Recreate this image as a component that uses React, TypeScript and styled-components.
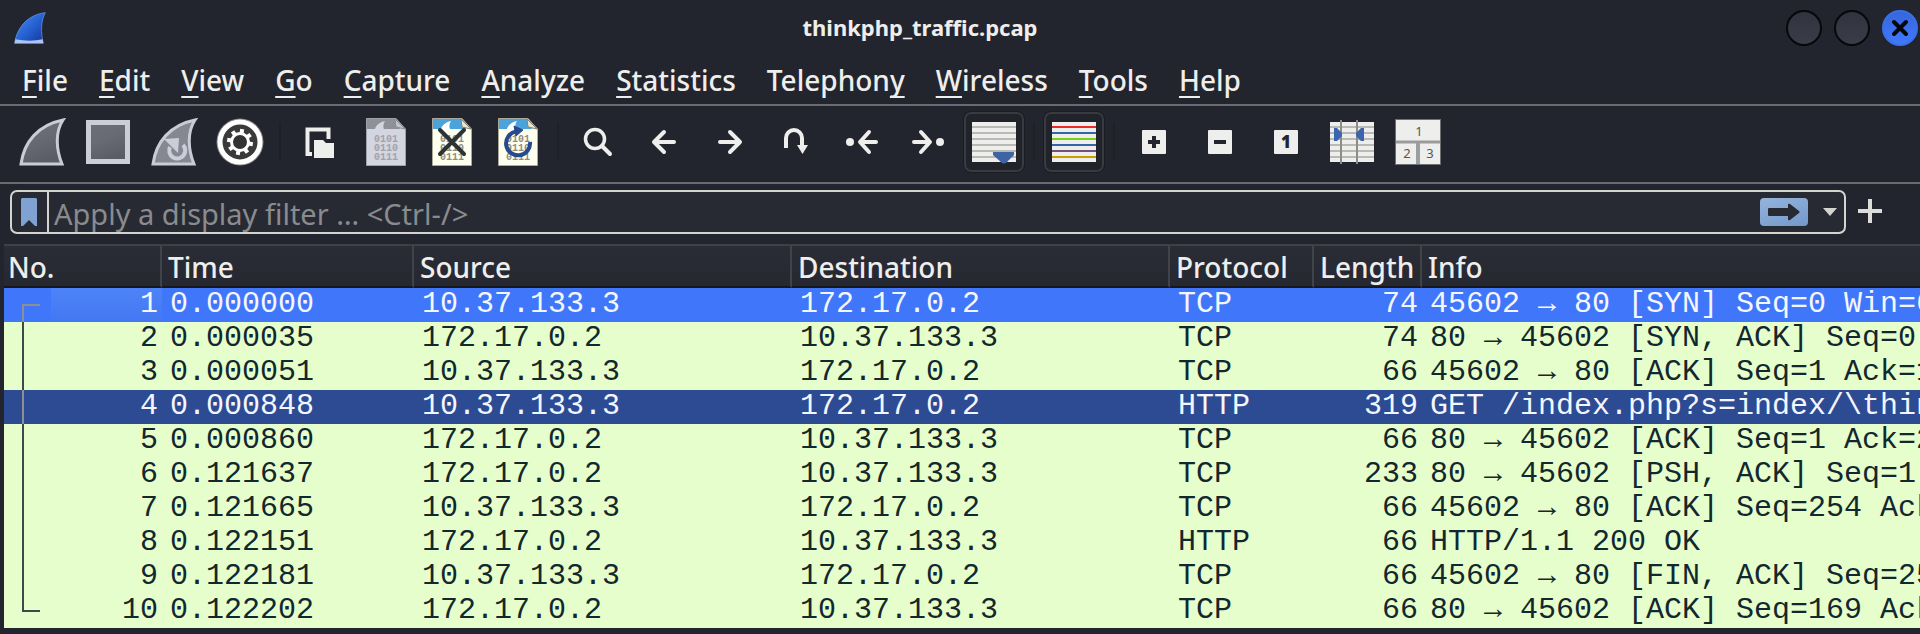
import React from 'react';
import styled, { createGlobalStyle, css } from 'styled-components';

const GlobalStyle = createGlobalStyle`
  * { box-sizing: border-box; }
  html, body, #root { min-height: 100vh; }
  body {
    margin: 0;
    background: #23252e;
    color: #eeeeec;
    font-family: "Noto Sans", "Liberation Sans", sans-serif;
    font-size: 28px;
    overflow: hidden;
  }
  button, input { font: inherit; color: inherit; }
`;

const Window = styled.div`
  display: flex;
  flex-direction: column;
  min-height: 100vh;
`;

const TitleBar = styled.header`
  display: flex;
  align-items: center;
  height: 56px;
  padding: 0 2px 0 14px;
`;

const Title = styled.h1`
  flex: 1;
  margin: 0;
  padding: 0 0 2px 8px;
  text-align: center;
  font-size: 22px;
  font-weight: 700;
  line-height: 54px;
`;

const WindowButtons = styled.div`
  display: flex;
  gap: 12px;
`;

const WindowButton = styled.button<{ $close?: boolean }>`
  display: grid;
  place-items: center;
  width: 36px;
  height: 36px;
  padding: 0;
  border: 2px solid ${(p) => (p.$close ? '#3a70ec' : '#07080b')};
  border-radius: 50%;
  background: ${(p) =>
    p.$close ? 'linear-gradient(#3666dc, #4078fc)' : 'linear-gradient(#31333d, #3a3d49)'};
`;

const MenuBar = styled.nav`
  display: flex;
  gap: 1px;
  height: 50px;
  padding-left: 7px;
  border-bottom: 2px solid #6a6b70;
`;

const MenuItem = styled.button`
  padding: 0 15px;
  border: 0;
  background: none;
  font-weight: 500;
  line-height: 46px;
`;

const Mnemonic = styled.span`
  text-decoration: underline;
  text-decoration-thickness: 2px;
  text-underline-offset: 5px;
  text-decoration-skip-ink: none;
`;

const ToolBar = styled.div`
  display: flex;
  align-items: center;
  height: 78px;
  padding: 0 0 4px 9px;
  border-bottom: 2px solid #6a6b70;
`;

const Separator = styled.span`
  width: 2px;
  height: 38px;
  margin: 0 6px;
  background: #1e2028;
`;

const ToolButton = styled.button<{ $pressed?: boolean }>`
  display: grid;
  place-items: center;
  width: 66px;
  height: 60px;
  padding: 0;
  border: 0;
  background: none;
  ${(p) =>
    p.$pressed &&
    css`
      width: 60px;
      margin: 0 3px;
      border: 2px solid #393b41;
      border-radius: 7px;
      outline: 1px solid #1b1c22;
      background: #21232b;
    `}
`;

const FilterRow = styled.form`
  display: flex;
  align-items: center;
  height: 60px;
  margin: 0;
  padding: 6px 36px 10px 10px;
`;

const FilterBox = styled.div`
  display: flex;
  align-items: center;
  flex: 1;
  height: 44px;
  border: 2px solid #d3d4cf;
  border-radius: 7px;
  background: #272a33;
`;

const BookmarkButton = styled.button`
  display: grid;
  place-items: center;
  width: 37px;
  height: 40px;
  padding: 0 2px 0 0;
  border: 0;
  border-right: 2px solid #d3d4cf;
  background: none;
`;

const FilterInput = styled.input`
  flex: 1;
  min-width: 0;
  height: 40px;
  padding: 2px 5px 0;
  border: 0;
  outline: 0;
  background: none;
  font-size: 29px;
  &::placeholder { color: #8a8b8e; opacity: 1; }
`;

const ApplyButton = styled.button`
  display: grid;
  place-items: center;
  width: 48px;
  height: 28px;
  margin-right: 8px;
  padding: 0;
  border: 0;
  border-radius: 4px;
  background: linear-gradient(160deg, #96b4dc, #7299ca);
`;

const PlainButton = styled.button`
  display: grid;
  place-items: center;
  width: 28px;
  height: 40px;
  padding: 0;
  border: 0;
  background: none;
`;

const AddButton = styled(PlainButton)`
  margin-left: 10px;
`;

const PacketPane = styled.main`
  padding-left: 4px;
  overflow: hidden;
`;

const PacketTable = styled.table`
  width: 100%;
  table-layout: fixed;
  border-collapse: separate;
  border-spacing: 0;
`;

const Col = styled.col<{ $width?: number }>`
  width: ${(p) => (p.$width ? `${p.$width}px` : 'auto')};
`;

const HeadCell = styled.th`
  height: 44px;
  padding: 2px 0 0 6px;
  border-top: 2px solid #3f4148;
  border-bottom: 2px solid #15171c;
  border-right: 2px solid #41434a;
  background: linear-gradient(#2a2d36, #252831);
  text-align: left;
  font-weight: 500;
  line-height: 38px;
  white-space: nowrap;
  &:first-child { padding-left: 4px; }
  &:last-child { border-right: 0; }
`;

type Tone = 'current' | 'related' | 'normal';

const rowColours: Record<Tone, { back: string; text: string; line: string }> = {
  current: { back: '#4076f9', text: '#f4f6ff', line: '#8d8f93' },
  related: { back: '#2d4b92', text: '#f4f6ff', line: '#8d8f93' },
  normal: { back: '#e6fecb', text: '#12272e', line: '#3c4a4c' },
};

const Row = styled.tr<{ $tone: Tone }>`
  background: ${(p) => rowColours[p.$tone].back};
  color: ${(p) => rowColours[p.$tone].text};
  font-family: "Liberation Mono", "DejaVu Sans Mono", monospace;
  font-size: 30px;
  line-height: 32px;
`;

const Cell = styled.td<{ $right?: boolean }>`
  height: 34px;
  padding: 0 4px 2px 8px;
  overflow: hidden;
  white-space: nowrap;
  text-align: ${(p) => (p.$right ? 'right' : 'left')};
`;

const NumberCell = styled.td`
  height: 34px;
  padding: 0;
`;

const NumberLine = styled.div`
  display: flex;
  height: 34px;
  padding-left: 18px;
`;

type Place = 'first' | 'middle' | 'last';

const Bracket = styled.span<{ $tone: Tone; $place: Place }>`
  width: 18px;
  height: ${(p) => (p.$place === 'middle' ? 34 : 18)}px;
  align-self: ${(p) => (p.$place === 'first' ? 'flex-end' : 'flex-start')};
  border: 0 solid ${(p) => rowColours[p.$tone].line};
  border-left-width: 2px;
  border-top-width: ${(p) => (p.$place === 'first' ? 2 : 0)}px;
  border-bottom-width: ${(p) => (p.$place === 'last' ? 2 : 0)}px;
`;

const NumberValue = styled.span<{ $focused: boolean }>`
  flex: 1;
  margin-left: 11px;
  padding-right: 4px;
  text-align: right;
  background: ${(p) => (p.$focused ? 'linear-gradient(#4d83f8, #4477f2)' : 'none')};
`;

/* ---------- icons ---------- */

const Icon = ({ size = 48, children }: { size?: number; children: React.ReactNode }) => (
  <svg width={size} height={size} viewBox="0 0 48 48" aria-hidden="true">
    {children}
  </svg>
);

const finPath = 'M3 46 C6 24 20 7 45 2 C37 14 38 31 44 46 Z';

const AppLogo = () => (
  <svg width="32" height="32" viewBox="0 0 48 48" aria-hidden="true">
    <defs>
      <linearGradient id="logo" x1="0" y1="0" x2="1" y2="1">
        <stop offset="0" stopColor="#4a90f0" />
        <stop offset="0.5" stopColor="#2763d4" />
        <stop offset="1" stopColor="#123295" />
      </linearGradient>
    </defs>
    <path d="M1 47 C4 24 20 4 47 1 C40 14 40 31 44 47 Z" fill="url(#logo)" stroke="#6d9ff0" strokeWidth="1" />
    <path d="M1 47 L2 41 Q24 45 43 41 L44 47 Z" fill="#a9c4f5" />
  </svg>
);

const Greys = () => (
  <defs>
    <linearGradient id="grey" x1="0" y1="0" x2="0.4" y2="1">
      <stop offset="0" stopColor="#6c6f78" />
      <stop offset="0.5" stopColor="#686b73" />
      <stop offset="1" stopColor="#5a5d65" />
    </linearGradient>
  </defs>
);

const StartIcon = () => (
  <Icon>
    <Greys />
    <path d={finPath} fill="url(#grey)" stroke="#c9ccd8" strokeWidth="3" />
  </Icon>
);

const StopIcon = () => (
  <Icon>
    <Greys />
    <rect x="4.500" y="4.500" width="39" height="39" fill="url(#grey)" stroke="#cbcdd9" strokeWidth="5" />
  </Icon>
);

const RestartIcon = () => (
  <Icon>
    <path d={finPath} fill="#858891" stroke="#c9ccd8" strokeWidth="3" />
    <path d="M20 29 A8 8 0 1 0 33 27" fill="none" stroke="#cbcdd9" strokeWidth="4" />
    <path d="M14 21 L29 20 L28 35 Z" fill="#cbcdd9" />
  </Icon>
);

const teeth = [0, 45, 90, 135, 180, 225, 270, 315];

const OptionsIcon = () => (
  <Icon>
    <circle cx="24" cy="24" r="23.500" fill="#8b8b8b" />
    <circle cx="24" cy="24" r="20" fill="#3a3a3a" stroke="#ffffff" strokeWidth="5" />
    {teeth.map((angle) => (
      <rect key={angle} x="22" y="11" width="4" height="6" fill="#fff" transform={`rotate(${angle + 10} 24 24)`} />
    ))}
    <circle cx="24" cy="24" r="8.500" fill="#333" stroke="#fff" strokeWidth="3" />
  </Icon>
);

const OpenIcon = () => (
  <Icon>
    <path d="M16 36 H11.500 V11.500 H32.500 V21" fill="none" stroke="#eeeeec" strokeWidth="4" />
    <path d="M18 22 H27 L30 25 H38 V40 H18 Z" fill="#eeeeec" />
  </Icon>
);

const Document = ({ dim, children }: { dim?: boolean; children?: React.ReactNode }) => (
  <Icon>
    <path
      d="M4.500 0.500 H34 L43.500 11 V47.500 H4.500 Z"
      fill={dim ? '#d3d5e0' : '#fffff0'}
      stroke={dim ? '#9fa1aa' : '#a9a899'}
    />
    <path d="M5 1 H33 L38 11 H5 Z" fill={dim ? '#8f9199' : '#4ba3dc'} />
    <path d="M13 11 C14 7 18 4 23 3 C21 6 21 9 22 11 Z" fill={dim ? '#d3d5e0' : '#ffffff'} />
    <path d="M33 1 L43 11 L34 9 Z" fill={dim ? '#c3c5ce' : '#e8e6cf'} stroke={dim ? '#8a8c95' : '#85836c'} />
    <g fill={dim ? '#a0a2ab' : '#8d8d83'} fontFamily="Liberation Mono, monospace" fontSize="10" fontWeight="700" textAnchor="middle">
      <text x="24" y="24">0101</text>
      <text x="24" y="33">0110</text>
      <text x="24" y="42">0111</text>
    </g>
    {children}
  </Icon>
);

const CloseFileIcon = () => (
  <Document>
    <path d="M12 12 L36 36 M36 12 L12 36" stroke="#2b3336" strokeWidth="4" strokeLinecap="round" />
  </Document>
);

const ReloadIcon = () => (
  <Document>
    <path d="M22 13.500 A12 12 0 1 0 36 24" fill="none" stroke="#254a8d" strokeWidth="4" />
    <path d="M20 8 L29 12 L22 18 Z" fill="#254a8d" stroke="#254a8d" strokeLinejoin="round" />
  </Document>
);

const SearchIcon = () => (
  <Icon>
    <circle cx="21" cy="21" r="9.500" fill="none" stroke="#eeeeec" strokeWidth="3.500" />
    <path d="M28 28 L36 36" stroke="#eeeeec" strokeWidth="4" strokeLinecap="round" />
  </Icon>
);

const ArrowIcon = ({ flip, dot }: { flip?: boolean; dot?: boolean }) => (
  <Icon>
    <g transform={flip ? 'matrix(-1 0 0 1 48 0)' : undefined}>
      {dot && <circle cx="12" cy="24" r="4" fill="#eeeeec" />}
      <path
        d={dot ? 'M38 24 H24 M31 14 L22 24 L31 34' : 'M34 24 H16 M24 14 L14 24 L24 34'}
        fill="none"
        stroke="#eeeeec"
        strokeWidth="4"
        strokeLinecap="round"
        strokeLinejoin="round"
      />
    </g>
  </Icon>
);

const GoToIcon = () => (
  <Icon>
    <path d="M14 30 V20 A8 8 0 0 1 30 20 V28" fill="none" stroke="#eeeeec" strokeWidth="4" />
    <path d="M25 27 H36 L30.500 36 Z" fill="#eeeeec" />
  </Icon>
);

const Sheet = ({ colours, children }: { colours: string[]; children?: React.ReactNode }) => (
  <Icon>
    <rect x="2" y="4" width="44" height="40" fill="#eeeeec" />
    {colours.map((colour, i) => (
      <rect key={i} x="2" y={8 + i * 6} width="44" height="2" fill={colour} />
    ))}
    {children}
  </Icon>
);

const plainLines = Array(6).fill('#b9bab6');

const AutoScrollIcon = () => (
  <Sheet colours={plainLines}>
    <path d="M23 34 H44 V37 L36 45 Q34 46 32 45 L23 37 Z" fill="#3f64a4" />
  </Sheet>
);

const ColoriseIcon = () => (
  <Sheet colours={['#ef2929', '#3465a4', '#73d216', '#3465a4', '#75507b', '#c4a000']} />
);

const ResizeIcon = () => (
  <Sheet colours={plainLines}>
    <path d="M13 2 V46 M29 2 V46" stroke="#8c8d86" strokeWidth="2" />
    <path d="M6 10 H9 L14 15 V18 L9 23 H6 Z M36 10 H33 L28 15 V18 L33 23 H36 Z" fill="#3c65ad" />
  </Sheet>
);

const LayoutIcon = () => (
  <Icon>
    <rect x="1.500" y="1.500" width="45" height="45" fill="#eeeeec" stroke="#6c7070" />
    <path d="M2 24 H46" stroke="#9a9c9c" strokeWidth="3" />
    <path d="M24 25 V46" stroke="#9a9fa2" strokeWidth="4" />
    <g fill="#555753" fontFamily="Noto Sans, sans-serif" fontSize="13" textAnchor="middle">
      <text x="25" y="18">1</text>
      <text x="13" y="40">2</text>
      <text x="36" y="40">3</text>
    </g>
  </Icon>
);

const Tile = ({ d, label }: { d?: string; label?: string }) => (
  <Icon>
    <rect x="12" y="12" width="24" height="24" rx="1" fill="#eeeeec" />
    {d && <path d={d} fill="none" stroke="#23252e" strokeWidth="4" />}
    {label && (
      <text x="24" y="30" fill="#23252e" fontFamily="Noto Sans, sans-serif" fontSize="17" fontWeight="900" textAnchor="middle">
        {label}
      </text>
    )}
  </Icon>
);

/* ---------- data ---------- */

const menus: [string, string, string][] = [
  ['', 'F', 'ile'],
  ['', 'E', 'dit'],
  ['', 'V', 'iew'],
  ['', 'G', 'o'],
  ['', 'C', 'apture'],
  ['', 'A', 'nalyze'],
  ['', 'S', 'tatistics'],
  ['Telephon', 'y', ''],
  ['', 'W', 'ireless'],
  ['', 'T', 'ools'],
  ['', 'H', 'elp'],
];

type Tool = { label: string; icon: React.ReactNode; pressed?: boolean };

const toolGroups: Tool[][] = [
  [
    { label: 'Start capture', icon: <StartIcon /> },
    { label: 'Stop capture', icon: <StopIcon /> },
    { label: 'Restart capture', icon: <RestartIcon /> },
    { label: 'Capture options', icon: <OptionsIcon /> },
  ],
  [
    { label: 'Open file', icon: <OpenIcon /> },
    { label: 'Save file', icon: <Document dim /> },
    { label: 'Close file', icon: <CloseFileIcon /> },
    { label: 'Reload file', icon: <ReloadIcon /> },
  ],
  [
    { label: 'Find packet', icon: <SearchIcon /> },
    { label: 'Previous packet', icon: <ArrowIcon /> },
    { label: 'Next packet', icon: <ArrowIcon flip /> },
    { label: 'Go to packet', icon: <GoToIcon /> },
    { label: 'First packet', icon: <ArrowIcon dot /> },
    { label: 'Last packet', icon: <ArrowIcon flip dot /> },
    { label: 'Auto scroll', icon: <AutoScrollIcon />, pressed: true },
  ],
  [{ label: 'Colorize', icon: <ColoriseIcon />, pressed: true }],
  [
    { label: 'Zoom in', icon: <Tile d="M18 24 H30 M24 18 V30" /> },
    { label: 'Zoom out', icon: <Tile d="M18 24 H30" /> },
    { label: 'Normal size', icon: <Tile label="1" /> },
    { label: 'Resize columns', icon: <ResizeIcon /> },
    { label: 'Reset layout', icon: <LayoutIcon /> },
  ],
];

const columns: { name: string; width?: number }[] = [
  { name: 'No.', width: 158 },
  { name: 'Time', width: 252 },
  { name: 'Source', width: 378 },
  { name: 'Destination', width: 378 },
  { name: 'Protocol', width: 144 },
  { name: 'Length', width: 108 },
  { name: 'Info' },
];

const CLIENT = '10.37.133.3';
const SERVER = '172.17.0.2';

type Packet = { time: string; out: boolean; protocol: string; length: number; info: string };

const packets: Packet[] = [
  { time: '0.000000', out: true, protocol: 'TCP', length: 74, info: '45602 → 80 [SYN] Seq=0 Win=6' },
  { time: '0.000035', out: false, protocol: 'TCP', length: 74, info: '80 → 45602 [SYN, ACK] Seq=0' },
  { time: '0.000051', out: true, protocol: 'TCP', length: 66, info: '45602 → 80 [ACK] Seq=1 Ack=1' },
  { time: '0.000848', out: true, protocol: 'HTTP', length: 319, info: 'GET /index.php?s=index/\\thin' },
  { time: '0.000860', out: false, protocol: 'TCP', length: 66, info: '80 → 45602 [ACK] Seq=1 Ack=2' },
  { time: '0.121637', out: false, protocol: 'TCP', length: 233, info: '80 → 45602 [PSH, ACK] Seq=1' },
  { time: '0.121665', out: true, protocol: 'TCP', length: 66, info: '45602 → 80 [ACK] Seq=254 Ack' },
  { time: '0.122151', out: false, protocol: 'HTTP', length: 66, info: 'HTTP/1.1 200 OK' },
  { time: '0.122181', out: true, protocol: 'TCP', length: 66, info: '45602 → 80 [FIN, ACK] Seq=25' },
  { time: '0.122202', out: false, protocol: 'TCP', length: 66, info: '80 → 45602 [ACK] Seq=169 Ack' },
];

const toneOf = (i: number): Tone => (i === 0 ? 'current' : i === 3 ? 'related' : 'normal');
const placeOf = (i: number): Place => (i === 0 ? 'first' : i === packets.length - 1 ? 'last' : 'middle');

export default function App() {
  return (
    <>
      <GlobalStyle />
      <Window>
        <TitleBar>
          <AppLogo />
          <Title>thinkphp_traffic.pcap</Title>
          <WindowButtons>
            <WindowButton aria-label="Minimize" />
            <WindowButton aria-label="Maximize" />
            <WindowButton aria-label="Close" $close>
              <svg width="18" height="18" viewBox="0 0 18 18" aria-hidden="true">
                <path d="M3 3 L15 15 M15 3 L3 15" stroke="#05070c" strokeWidth="4" strokeLinecap="round" />
              </svg>
            </WindowButton>
          </WindowButtons>
        </TitleBar>

        <MenuBar>
          {menus.map(([before, key, after]) => (
            <MenuItem key={before + key + after}>
              {before}
              <Mnemonic>{key}</Mnemonic>
              {after}
            </MenuItem>
          ))}
        </MenuBar>

        <ToolBar role="toolbar">
          {toolGroups.map((group, i) => (
            <React.Fragment key={i}>
              {i > 0 && <Separator />}
              {group.map((tool) => (
                <ToolButton key={tool.label} aria-label={tool.label} aria-pressed={tool.pressed} $pressed={tool.pressed}>
                  {tool.icon}
                </ToolButton>
              ))}
            </React.Fragment>
          ))}
        </ToolBar>

        <FilterRow onSubmit={(e) => e.preventDefault()}>
          <FilterBox>
            <BookmarkButton type="button" aria-label="Saved filters">
              <svg width="16" height="28" viewBox="0 0 16 28" aria-hidden="true">
                <path d="M1 0 H15 L16 1 V28 H14 L8 22 L2 28 H0 V1 Z" fill="#7fa2d2" />
              </svg>
            </BookmarkButton>
            <FilterInput aria-label="Display filter" placeholder="Apply a display filter … <Ctrl-/>" />
            <ApplyButton aria-label="Apply filter">
              <svg width="32" height="18" viewBox="0 0 32 18" aria-hidden="true">
                <path d="M0 6 Q0 5 1 5 H20 V2 Q20 0 22 1 L31 8 Q32 9 31 10 L22 17 Q20 18 20 16 V13 H1 Q0 13 0 12 Z" fill="#272a33" />
              </svg>
            </ApplyButton>
            <PlainButton type="button" aria-label="Filter history">
              <svg width="14" height="8" viewBox="0 0 14 8" aria-hidden="true">
                <path d="M0 0 H14 L7 8 Z" fill="#d3d4cf" />
              </svg>
            </PlainButton>
          </FilterBox>
          <AddButton type="button" aria-label="Add filter button">
            <svg width="26" height="26" viewBox="0 0 26 26" aria-hidden="true">
              <path d="M1 12 H25 M13 0 V24" stroke="#dcdddb" strokeWidth="4" />
            </svg>
          </AddButton>
        </FilterRow>

        <PacketPane>
          <PacketTable>
            <colgroup>
              {columns.map((c) => (
                <Col key={c.name} $width={c.width} />
              ))}
            </colgroup>
            <thead>
              <tr>
                {columns.map((c) => (
                  <HeadCell key={c.name} scope="col">
                    {c.name}
                  </HeadCell>
                ))}
              </tr>
            </thead>
            <tbody>
              {packets.map((p, i) => (
                <Row key={i} $tone={toneOf(i)}>
                  <NumberCell>
                    <NumberLine>
                      <Bracket $tone={toneOf(i)} $place={placeOf(i)} />
                      <NumberValue $focused={i === 0}>{i + 1}</NumberValue>
                    </NumberLine>
                  </NumberCell>
                  <Cell>{p.time}</Cell>
                  <Cell>{p.out ? CLIENT : SERVER}</Cell>
                  <Cell>{p.out ? SERVER : CLIENT}</Cell>
                  <Cell>{p.protocol}</Cell>
                  <Cell $right>{p.length}</Cell>
                  <Cell>{p.info}</Cell>
                </Row>
              ))}
            </tbody>
          </PacketTable>
        </PacketPane>
      </Window>
    </>
  );
}
